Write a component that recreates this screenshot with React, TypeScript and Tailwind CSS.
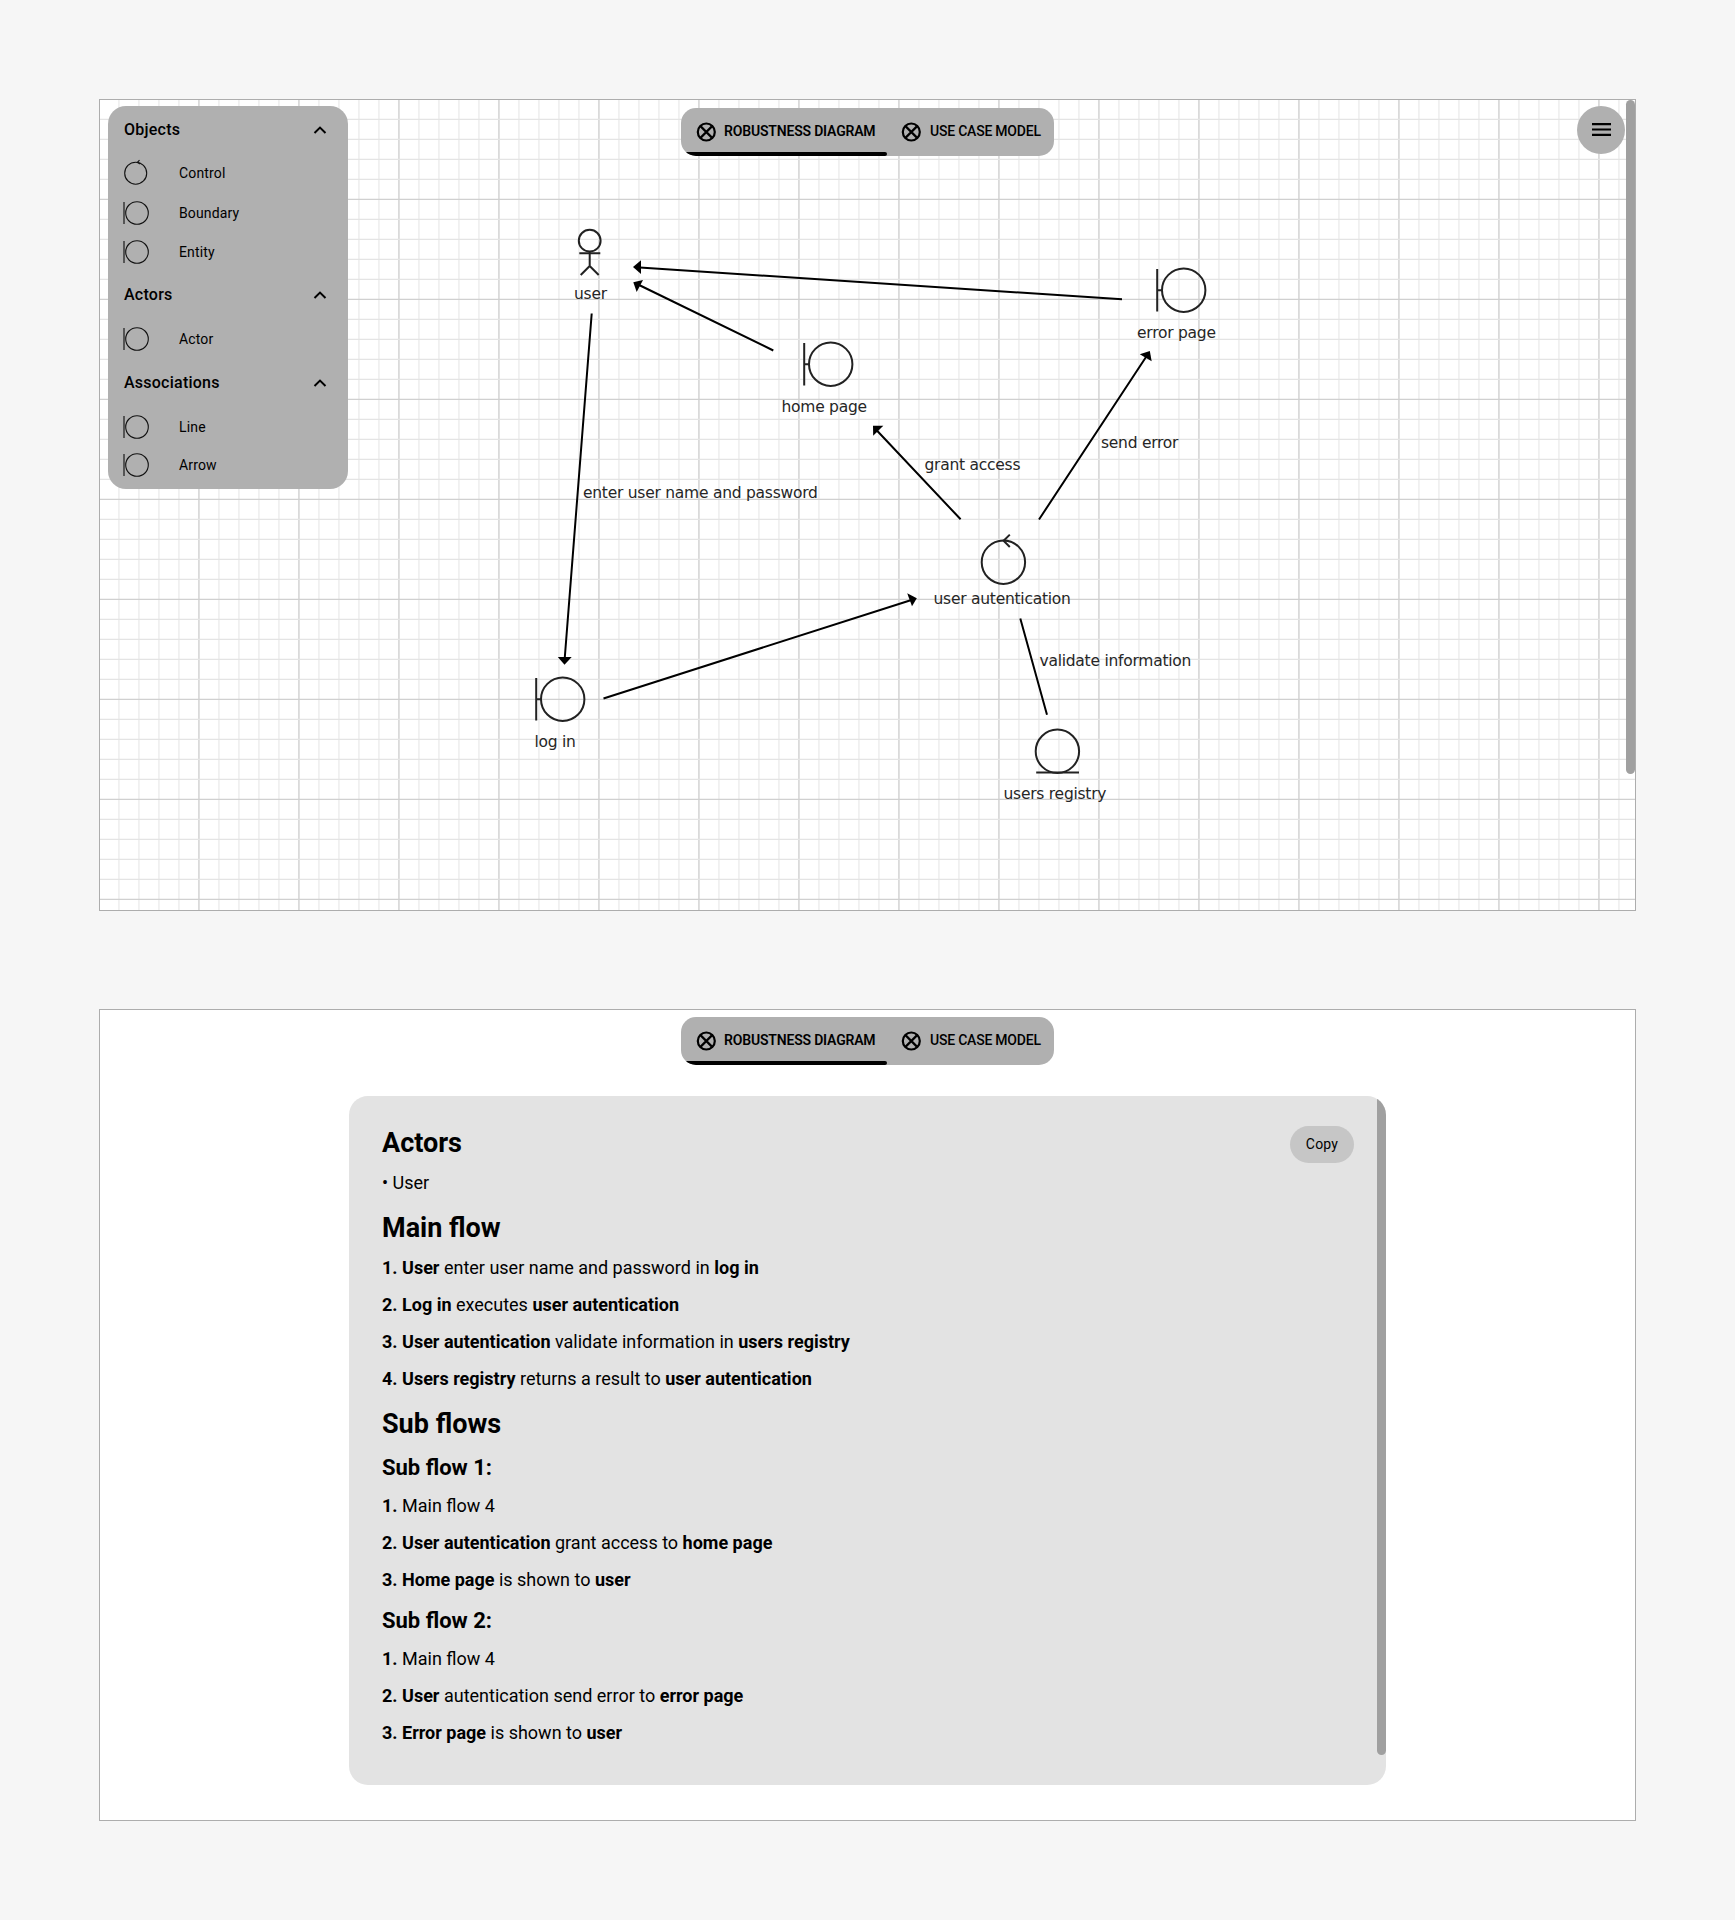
import React from "react";

type SymbolKind = "control" | "boundary";

function Tab({ label, active = false }: { label: string; active?: boolean }) {
  return (
    <div className={active ? "flex w-[206px] shrink-0 items-center pb-[3px] pl-[15px]" : "flex items-center pb-[3px] pl-[14px]"}>
      <svg className="mt-0.5 size-5 shrink-0" viewBox="0 0 20 20" fill="none" stroke="black" strokeWidth="2.2">
        <circle cx="10.3" cy="10" r="8.5" />
        <path d="M4.7 4.4 15.9 15.6M15.9 4.4 4.7 15.6" />
      </svg>
      <span
        className={
          active
            ? "ml-2 whitespace-nowrap text-[14px] leading-5 font-semibold tracking-[-0.18px]"
            : "ml-[9px] whitespace-nowrap text-[14px] leading-5 font-medium tracking-[-0.22px]"
        }
      >
        {label}
      </span>
    </div>
  );
}

function TabBar() {
  return (
    <nav className="relative flex h-12 w-[373px] overflow-hidden rounded-[15px] bg-[#b0b0b0]">
      <Tab label="ROBUSTNESS DIAGRAM" active />
      <Tab label="USE CASE MODEL" />
      <div className="absolute bottom-0 left-0 h-1 w-[206px] rounded-r-sm bg-black" />
    </nav>
  );
}

function PaletteIcon({ kind }: { kind: SymbolKind }) {
  return (
    <svg className="h-7 w-7 shrink-0" viewBox="0 0 28 28" fill="none" stroke="#111" strokeWidth="1.1">
      {kind === "control" ? (
        <>
          <circle cx="12.7" cy="14.2" r="11" />
          <path d="M16.5 1.2 14.4 3.4 17.2 5" />
        </>
      ) : (
        <>
          <path d="M1 3v22" stroke="#555" strokeWidth="2" />
          <circle cx="14" cy="14" r="11.3" />
        </>
      )}
    </svg>
  );
}

function PaletteHeader({ label, height }: { label: string; height: string }) {
  return (
    <div className={`flex items-center justify-between pr-[21px] pl-4 ${height}`}>
      <span className="text-[16px] leading-6 font-medium tracking-[0.24px]">{label}</span>
      <svg className="h-2 w-3.5" viewBox="0 0 14 8" fill="none" stroke="black" strokeWidth="2">
        <path d="M1.5 7 7 1.6 12.5 7" />
      </svg>
    </div>
  );
}

function PaletteItem({ label, height, kind = "boundary" }: { label: string; height: string; kind?: SymbolKind }) {
  return (
    <div className={`flex items-center pl-[15px] ${height}`}>
      <PaletteIcon kind={kind} />
      <span className="ml-7 text-[14px] leading-5 tracking-[0.15px]">{label}</span>
    </div>
  );
}

function Palette() {
  return (
    <aside className="absolute top-[6px] left-2 flex h-[383px] w-60 flex-col rounded-[18px] bg-[#b0b0b0]">
      <PaletteHeader label="Objects" height="h-[48px]" />
      <PaletteItem label="Control" height="h-[38px]" kind="control" />
      <PaletteItem label="Boundary" height="h-[42px]" />
      <PaletteItem label="Entity" height="h-[36px]" />
      <PaletteHeader label="Actors" height="h-[48px] pt-0.5" />
      <PaletteItem label="Actor" height="h-[42px]" />
      <PaletteHeader label="Associations" height="h-[44px] pt-0.5" />
      <PaletteItem label="Line" height="h-[46px]" />
      <PaletteItem label="Arrow" height="h-[30px]" />
    </aside>
  );
}

function Boundary({ cx, cy }: { cx: number; cy: number }) {
  return (
    <g>
      <circle cx={cx} cy={cy} r="21.7" />
      <path d={`M${cx - 26.5} ${cy - 21.3}v42.6M${cx - 26.5} ${cy}h5`} />
    </g>
  );
}

const minorX = Array.from({ length: 77 }, (_, i) => i + 1);
const minorY = Array.from({ length: 40 }, (_, i) => i + 1);

function Drawing() {
  return (
    <svg className="absolute inset-0 h-full w-full" viewBox="100 100 1535 810" fill="none">
      {minorX.map((i) => (
        <path key={i} d={`M${98.9 + i * 20} 100V910`} stroke={i % 5 === 0 ? "#dadada" : "#f0f0f0"} strokeWidth="1.8" />
      ))}
      {minorY.map((i) => (
        <path key={i} d={`M100 ${99.3 + i * 20}H1635`} stroke={i % 5 === 0 ? "#d0d0d0" : "#e4e4e4"} strokeWidth="1.2" />
      ))}
      <g stroke="#222" strokeWidth="2">
        <circle cx="589.7" cy="240.7" r="10.9" />
        <path d="M579.3 253.2h21M589.7 252v14.5M589.7 266l-9 9M589.7 266l9 9" />
        <Boundary cx={830.7} cy={364.2} />
        <Boundary cx={1183.7} cy={290.2} />
        <Boundary cx={562.7} cy={699.2} />
        <circle cx="1003.4" cy="562.2" r="21.7" />
        <path d="M1009.8 534.6 1003.6 540.8 1009.8 547" />
        <circle cx="1057.4" cy="751.3" r="21.7" />
        <path d="M1036.2 772.5h42.8" />
      </g>
      <g stroke="black" strokeWidth="2">
        <path d="M1122 299.3 636 267.2M773.3 350.5 636 283.5M591.7 313.5 564.6 660M603.5 698.5 913 599.5M960.6 519.3 875 428.5M1039 519.5 1148 354M1020.3 618.5 1047 714.8" />
      </g>
      <g fill="black">
        <path d="M633 267 641 260.3V273.9Z" />
        <path d="M633.3 282.3 643 280 636.7 292Z" />
        <path d="M564.5 664.7 557.8 657H571.7Z" />
        <path d="M916.8 598.3 907.2 593.3 912 606.3Z" />
        <path d="M873 425.8H883.3L873.2 435.8Z" />
        <path d="M1149.8 351 1139.8 354.3 1151.7 361.2Z" />
      </g>
    </svg>
  );
}

const labels = [
  { text: "user", place: "left-[474px] top-[183px]" },
  { text: "home page", place: "left-[681.5px] top-[296px]" },
  { text: "error page", place: "left-[1037px] top-[222px]" },
  { text: "log in", place: "left-[434.5px] top-[631px]" },
  { text: "user autentication", place: "left-[833.5px] top-[488px]" },
  { text: "users registry", place: "left-[903.5px] top-[683px]" },
  { text: "enter user name and password", place: "left-[483px] top-[382px]" },
  { text: "grant access", place: "left-[824.5px] top-[354px]" },
  { text: "send error", place: "left-[1001px] top-[332px]" },
  { text: "validate information", place: "left-[939.5px] top-[550px]" },
];

function DiagramFrame() {
  return (
    <section className="relative flex h-[812px] w-[1537px] justify-center overflow-hidden border border-[#adadad] bg-white pt-2">
      <Drawing />
      {labels.map((l) => (
        <span
          key={l.text}
          className={`absolute font-['DejaVu_Sans',Verdana,sans-serif] text-[15.5px] leading-[22px] tracking-[-0.25px] whitespace-nowrap text-[#262626] ${l.place}`}
        >
          {l.text}
        </span>
      ))}
      <TabBar />
      <Palette />
      <button aria-label="Menu" className="absolute top-[6px] left-[1477px] flex size-12 items-center justify-center rounded-full bg-[#b0b0b0]">
        <svg className="mb-px h-[13px] w-[19px]" viewBox="0 0 19 13" stroke="black" strokeWidth="2.1">
          <path d="M0 1.1h19M0 6.5h19M0 11.9h19" />
        </svg>
      </button>
      <div className="absolute top-0 right-0 h-[674px] w-[9px] rounded-full bg-[#a0a0a0]" />
    </section>
  );
}

function Step({ children }: { children: React.ReactNode }) {
  return <p className="h-[37px] text-[18px] leading-[37px]">{children}</p>;
}

function Heading({ children }: { children: React.ReactNode }) {
  return <h2 className="h-12 pt-[5px] text-[27px] leading-[44px] font-bold">{children}</h2>;
}

function SubHeading({ children }: { children: React.ReactNode }) {
  return <h3 className="h-[42px] pt-0.5 text-[22px] leading-[41px] font-bold">{children}</h3>;
}

function B({ children }: { children: React.ReactNode }) {
  return <b className="font-bold">{children}</b>;
}

function ModelFrame() {
  return (
    <section className="flex h-[812px] w-[1537px] flex-col items-center border border-[#adadad] bg-white pt-[7px]">
      <TabBar />
      <article className="relative mt-[31px] h-[689px] w-[1037px] overflow-hidden rounded-[19px] bg-[#e3e3e3] pt-5 pl-[33px]">
        <Heading>Actors</Heading>
        <Step>• User</Step>
        <Heading>Main flow</Heading>
        <Step><B>1. User</B> enter user name and password in <B>log in</B></Step>
        <Step><B>2. Log in</B> executes <B>user autentication</B></Step>
        <Step><B>3. User autentication</B> validate information in <B>users registry</B></Step>
        <Step><B>4. Users registry</B> returns a result to <B>user autentication</B></Step>
        <Heading>Sub flows</Heading>
        <SubHeading>Sub flow 1:</SubHeading>
        <Step><B>1.</B> Main flow 4</Step>
        <Step><B>2. User autentication</B> grant access to <B>home page</B></Step>
        <Step><B>3. Home page</B> is shown to <B>user</B></Step>
        <SubHeading>Sub flow 2:</SubHeading>
        <Step><B>1.</B> Main flow 4</Step>
        <Step><B>2. User</B> autentication send error to <B>error page</B></Step>
        <Step><B>3. Error page</B> is shown to <B>user</B></Step>
        <button className="absolute top-[30px] right-8 h-[37px] w-16 rounded-full bg-[#c6c6c6] text-[14px] tracking-[0.2px]">
          Copy
        </button>
        <div className="absolute top-0 right-0 h-[659px] w-[9px] rounded-b-full bg-[#a0a0a0]" />
      </article>
    </section>
  );
}

export default function App() {
  return (
    <main className="flex h-[1920px] w-[1735px] flex-col gap-[98px] bg-[#f6f6f6] pt-[99px] pl-[99px] font-[Roboto,sans-serif] text-black">
      <DiagramFrame />
      <ModelFrame />
    </main>
  );
}
